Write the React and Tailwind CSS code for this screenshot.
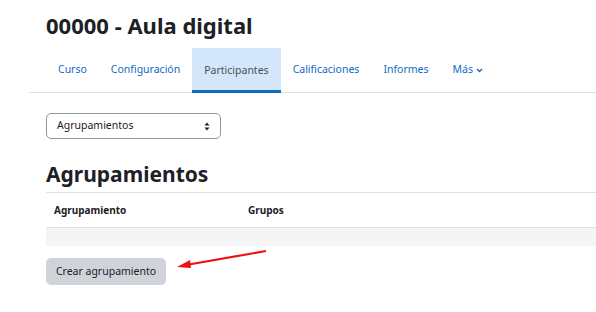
export default function App() {
  const tabs = ["Curso", "Configuración", "Participantes", "Calificaciones", "Informes"];
  return (
    <div className="relative w-[596px] h-[312px] bg-white overflow-hidden text-[#1d2125]" style={{ fontFamily: '"Noto Sans", "Open Sans", sans-serif' }}>
      <h1 className="pl-[46px] pt-[11px] text-[22px] leading-[28px] font-bold">00000 - Aula digital</h1>
      <div className="ml-[29px] mt-[9px] border-b border-[#dee2e6] flex pl-[17px] h-[45px]">
        {tabs.map((t) => (
          <div
            key={t}
            className={
              t === "Participantes"
                ? "px-[12px] flex items-center text-[10.5px] text-[#495057] bg-[#d4e6f9] border-b-[3px] border-[#0f6cbf] -mb-px pt-[3px]"
                : "px-[12px] flex items-center text-[10.5px] text-[#0f6cbf]"
            }
          >
            {t}
          </div>
        ))}
        <div className="px-[12px] flex items-center gap-[3px] text-[10.5px] text-[#0f6cbf]">
          Más
          <svg width="7" height="5" viewBox="0 0 7 5"><path d="M1 1l2.5 2.5L6 1" fill="none" stroke="#0f6cbf" strokeWidth="1.4" /></svg>
        </div>
      </div>
      <div className="pl-[46px]">
        <div className="mt-[20px] w-[175px] h-[26px] border border-[#8f959e] rounded-[5px] flex items-center justify-between pl-[10px] pr-[10px] text-[10.5px]">
          <span>Agrupamientos</span>
          <svg width="6" height="9" viewBox="0 0 6 9"><path d="M3 0.5L5.5 3.5H0.5Z M3 8.5L0.5 5.5H5.5Z" fill="#1d2125" /></svg>
        </div>
        <h2 className="mt-[21px] text-[21px] leading-[28px] font-bold">Agrupamientos</h2>
        <div className="mt-[4px] border-t border-[#dee2e6]">
          <div className="flex h-[35px] items-center border-b border-[#dee2e6] text-[10px] font-bold">
            <div className="pl-[8px] w-[202px]">Agrupamiento</div>
            <div>Grupos</div>
          </div>
          <div className="h-[18px] bg-[#f5f5f5]"></div>
        </div>
        <button className="mt-[12px] h-[27px] w-[120px] rounded-[5px] bg-[#ced4da] text-[10.5px] text-[#1d2125]">Crear agrupamiento</button>
      </div>
      <svg className="absolute left-0 top-0" width="596" height="312">
        <line x1="266" y1="251" x2="186" y2="265" stroke="#ee1111" strokeWidth="2.2" />
        <polygon points="177,267 190,260 191,268" fill="#ee1111" />
      </svg>
    </div>
  );
}
